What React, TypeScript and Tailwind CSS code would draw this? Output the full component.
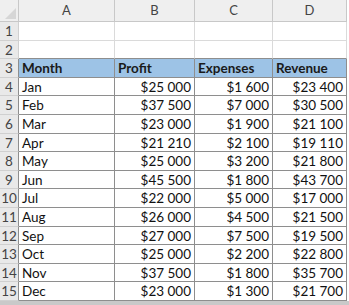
import React from "react";

const rows: [string, string, string, string][] = [
  ["Jan", "$25 000", "$1 600", "$23 400"],
  ["Feb", "$37 500", "$7 000", "$30 500"],
  ["Mar", "$23 000", "$1 900", "$21 100"],
  ["Apr", "$21 210", "$2 100", "$19 110"],
  ["May", "$25 000", "$3 200", "$21 800"],
  ["Jun", "$45 500", "$1 800", "$43 700"],
  ["Jul", "$22 000", "$5 000", "$17 000"],
  ["Aug", "$26 000", "$4 500", "$21 500"],
  ["Sep", "$27 000", "$7 500", "$19 500"],
  ["Oct", "$25 000", "$2 200", "$22 800"],
  ["Nov", "$37 500", "$1 800", "$35 700"],
  ["Dec", "$23 000", "$1 300", "$21 700"],
];

const rowHead = "flex items-end justify-center pb-px bg-[#e9e9e9] text-[#444] border-b border-b-[#d0d0d0] border-r";
const blank = "border-r border-b border-[#dadada] bg-white";
const cell = "flex items-end px-[3px] pb-px border-r border-b border-[#8e8e8e] bg-white text-[#111]";

export default function App() {
  return (
    <div
      className="w-[349px] h-[305px] bg-[#c9c9c9] overflow-hidden text-[13.5px] leading-none"
      style={{ fontFamily: "Lato, 'Noto Sans', sans-serif" }}
    >
      <div className="grid grid-cols-[19px_96px_80px_78px_74px] grid-rows-[22px_repeat(15,18.6px)] bg-white">
        {/* column headers */}
        <div className="relative bg-[#efefef] border-r border-b border-[#c8c8c8]">
          <div className="absolute right-[2px] bottom-[2px] w-0 h-0 border-l-[11px] border-l-transparent border-b-[11px] border-b-[#d6d6d6]" />
        </div>
        {["A", "B", "C", "D"].map((c) => (
          <div
            key={c}
            className="flex items-center justify-center bg-[#efefef] text-[#444] text-[13px] border-r border-b border-[#c8c8c8]"
          >
            {c}
          </div>
        ))}

        {/* empty rows 1-2 */}
        {[1, 2].map((n) => (
          <React.Fragment key={n}>
            <div className={rowHead + " border-r-[#d0d0d0]"}>{n}</div>
            {[0, 1, 2, 3].map((k) => (
              <div key={k} className={n === 2 ? "border-r border-r-[#dadada] border-b border-b-[#8e8e8e] bg-white" : blank} />
            ))}
          </React.Fragment>
        ))}

        {/* table header */}
        <div className={rowHead + " border-r-[#8e8e8e]"}>3</div>
        {["Month", "Profit", "Expenses", "Revenue"].map((h) => (
          <div key={h} className="flex items-end px-[3px] pb-px bg-[#9dc3e6] font-bold text-[#1a1a1a] border-r border-b border-[#8e8e8e]">
            {h}
          </div>
        ))}

        {rows.map((r, i) => (
          <React.Fragment key={r[0]}>
            <div className={rowHead + " border-r-[#8e8e8e]"}>{i + 4}</div>
            <div className={cell}>{r[0]}</div>
            <div className={cell + " justify-end"}>{r[1]}</div>
            <div className={cell + " justify-end"}>{r[2]}</div>
            <div className={cell + " justify-end"}>{r[3]}</div>
          </React.Fragment>
        ))}
      </div>
    </div>
  );
}
